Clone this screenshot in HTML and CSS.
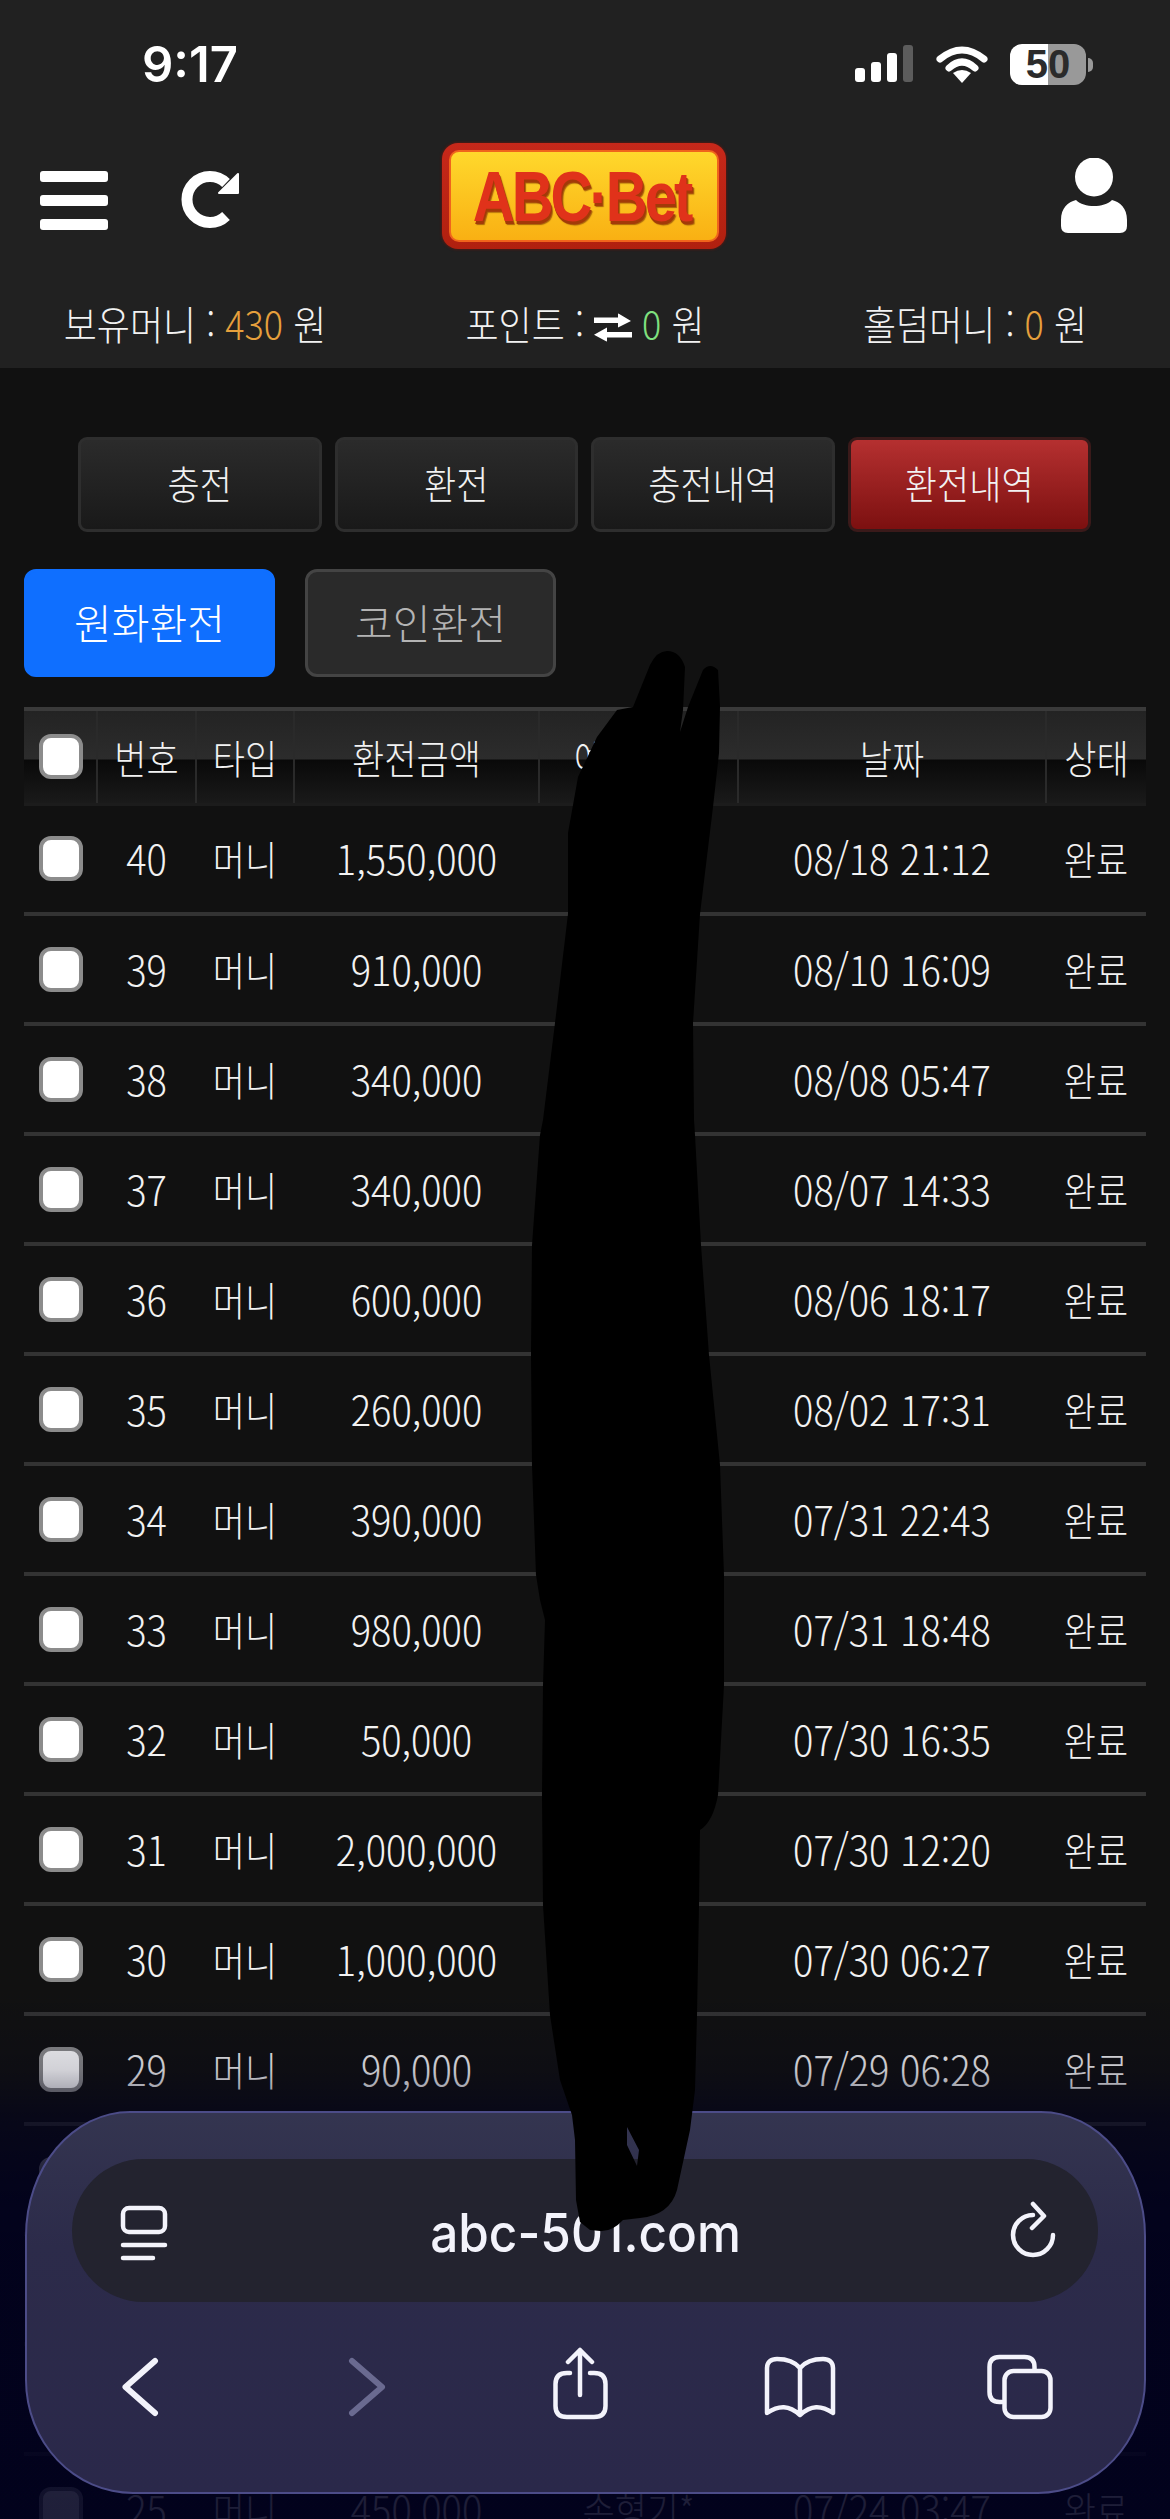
FILE: index.html
```html
<!DOCTYPE html>
<html lang="ko">
<head>
    <meta charset="UTF-8">
    <meta name="viewport" content="width=device-width, initial-scale=1.0">
    <title>ABC-Bet 환전내역</title>
    <link rel="stylesheet" href="styles.css">
</head>
<body>
    <header class="top">
        <div class="status">
            <span class="clock">9:17</span>
            <div class="status-icons">
                <svg width="60" height="40" viewBox="0 0 60 40">
                    <rect x="1" y="24" width="10" height="14" rx="3" fill="#fff"/>
                    <rect x="17" y="18" width="10" height="20" rx="3" fill="#fff"/>
                    <rect x="33" y="9" width="10" height="29" rx="3" fill="#fff"/>
                    <rect x="49" y="1" width="10" height="37" rx="3" fill="#5c5c5c"/>
                </svg>
                <svg width="52" height="40" viewBox="0 0 52 40">
                    <path d="M4 15 Q26 -3 48 15" fill="none" stroke="#fff" stroke-width="7" stroke-linecap="round"/>
                    <path d="M13 24 Q26 12 39 24" fill="none" stroke="#fff" stroke-width="7" stroke-linecap="round"/>
                    <path d="M17 29 Q26 23 35 29 L26 39 Z" fill="#fff"/>
                </svg>
                <div class="battery">50</div>
            </div>
        </div>

        <div class="topbar">
            <div class="topbar-left">
                <div class="burger"><span></span><span></span><span></span></div>
                <svg width="60" height="60" viewBox="0 0 60 60">
                    <path d="M46 46 A23 23 0 1 1 46 13" fill="none" stroke="#fff" stroke-width="11"/>
                    <polygon points="58,4 58,23 39,23" fill="#fff" stroke="#fff" stroke-width="2" stroke-linejoin="round"/>
                </svg>
            </div>
            <div class="logo"><div class="logo-in"><span>ABC·Bet</span></div></div>
            <div class="topbar-right">
                <svg width="68" height="76" viewBox="0 0 68 76">
                    <ellipse cx="34" cy="19" rx="19" ry="19.5" fill="#fff"/>
                    <path d="M1 62 C1 50 8 44 16 42 C24 50 44 50 52 42 C60 44 67 50 67 62 V68 Q67 75 60 75 H8 Q1 75 1 68 Z" fill="#fff"/>
                </svg>
            </div>
        </div>

        <div class="money">
            <div>보유머니 : <em class="orange">430</em> 원</div>
            <div>포인트 :
                <svg class="swap" width="38" height="26" viewBox="0 0 38 26">
                    <path d="M0 4 H24 V0 L37 7 L24 13 V9 H0 Z" fill="#fff"/>
                    <path d="M38 17 H13 V13 L0 19.5 L13 26 V22 H38 Z" fill="#fff"/>
                </svg>
                <em class="green">0</em> 원</div>
            <div>홀덤머니 : <em class="orange">0</em> 원</div>
        </div>
    </header>

    <main class="content">
        <nav class="menu">
            <a><span>충전</span></a>
            <a><span>환전</span></a>
            <a><span>충전내역</span></a>
            <a class="on"><span>환전내역</span></a>
        </nav>

        <div class="tabs">
            <button class="tab on">원화환전</button>
            <button class="tab">코인환전</button>
        </div>

        <table class="list">
            <colgroup>
                <col class="c-check"><col class="c-no"><col class="c-type"><col class="c-amount">
                <col class="c-name"><col class="c-date"><col class="c-state">
            </colgroup>
            <thead>
                <tr><th><input type="checkbox"></th><th><span>번호</span></th><th><span>타입</span></th><th><span>환전금액</span></th><th><span>예금주명</span></th><th><span>날짜</span></th><th><span>상태</span></th></tr>
            </thead>
            <tbody>
                <tr><td><input type="checkbox"></td><td>40</td><td>머니</td><td>1,550,000</td><td></td><td>08/18 21:12</td><td>완료</td></tr>
                <tr><td><input type="checkbox"></td><td>39</td><td>머니</td><td>910,000</td><td></td><td>08/10 16:09</td><td>완료</td></tr>
                <tr><td><input type="checkbox"></td><td>38</td><td>머니</td><td>340,000</td><td></td><td>08/08 05:47</td><td>완료</td></tr>
                <tr><td><input type="checkbox"></td><td>37</td><td>머니</td><td>340,000</td><td></td><td>08/07 14:33</td><td>완료</td></tr>
                <tr><td><input type="checkbox"></td><td>36</td><td>머니</td><td>600,000</td><td></td><td>08/06 18:17</td><td>완료</td></tr>
                <tr><td><input type="checkbox"></td><td>35</td><td>머니</td><td>260,000</td><td></td><td>08/02 17:31</td><td>완료</td></tr>
                <tr><td><input type="checkbox"></td><td>34</td><td>머니</td><td>390,000</td><td></td><td>07/31 22:43</td><td>완료</td></tr>
                <tr><td><input type="checkbox"></td><td>33</td><td>머니</td><td>980,000</td><td></td><td>07/31 18:48</td><td>완료</td></tr>
                <tr><td><input type="checkbox"></td><td>32</td><td>머니</td><td>50,000</td><td></td><td>07/30 16:35</td><td>완료</td></tr>
                <tr><td><input type="checkbox"></td><td>31</td><td>머니</td><td>2,000,000</td><td></td><td>07/30 12:20</td><td>완료</td></tr>
                <tr><td><input type="checkbox"></td><td>30</td><td>머니</td><td>1,000,000</td><td></td><td>07/30 06:27</td><td>완료</td></tr>
                <tr><td><input type="checkbox"></td><td>29</td><td>머니</td><td>90,000</td><td></td><td>07/29 06:28</td><td>완료</td></tr>
                <tr><td><input type="checkbox"></td><td>28</td><td>머니</td><td></td><td></td><td></td><td>완료</td></tr>
                <tr><td><input type="checkbox"></td><td>27</td><td>머니</td><td></td><td></td><td></td><td>완료</td></tr>
                <tr><td><input type="checkbox"></td><td>26</td><td>머니</td><td></td><td></td><td></td><td>완료</td></tr>
                <tr><td><input type="checkbox"></td><td>25</td><td>머니</td><td>450,000</td><td>손형기*</td><td>07/24 03:47</td><td>완료</td></tr>
            </tbody>
        </table>
    </main>

    <!-- safari toolbar sits over the page -->
    <div class="fade"></div>
    <div class="safari">
        <div class="url">
            <svg width="50" height="60" viewBox="0 0 50 60" class="ico">
                <rect x="4" y="7" width="42" height="24" rx="6"/>
                <path d="M4 44 H46 M4 57 H34"/>
            </svg>
            <span class="addr">abc-501.com</span>
            <svg width="50" height="60" viewBox="0 0 50 60" class="ico">
                <path d="M45 34 A20 20 0 1 1 25 14"/>
                <path d="M25 3 L36 15 L24 27"/>
            </svg>
        </div>
        <div class="tools">
            <svg width="40" height="60" viewBox="0 0 40 60" class="ico thick"><path d="M35 4 L5.5 30 L35 56"/></svg>
            <svg width="40" height="60" viewBox="0 0 40 60" class="ico thick off"><path d="M5 4 L35 30 L5 56"/></svg>
            <svg width="64" height="80" viewBox="0 0 64 80" class="ico">
                <path d="M32 3 V48 M20 15 L32 3 L44 15"/>
                <path d="M22 26 H19 Q7.5 26 7.5 37 V59 Q7.5 70 19 70 H46 Q57.5 70 57.5 59 V37 Q57.5 26 46 26 H42"/>
            </svg>
            <svg width="76" height="64" viewBox="0 0 76 64" class="ico">
                <path d="M38 13 C32 6 22 4 15 4 C9 4 5 7 5 13 V58 C17 50 27 50 38 60 C49 50 59 50 71 58 V13 C71 7 67 4 61 4 C54 4 44 6 38 13 V60"/>
            </svg>
            <svg width="72" height="72" viewBox="0 0 72 72" class="ico">
                <path d="M50.5 18 V16 Q50.5 6 40.5 6 H15.5 Q5.5 6 5.5 16 V41 Q5.5 51 15.5 51 H18"/>
                <rect x="20.5" y="20" width="46" height="46" rx="9"/>
            </svg>
        </div>
    </div>

    <!-- blacked out by hand in the screenshot -->
    <svg class="scribble" width="1170" height="2519" viewBox="0 0 1170 2519">
        <path fill-rule="evenodd" d="M667 651 Q680 651 685 667 L683 710 L680 732 L688 707 L703 670 Q710 662 718 670 L720 707 L719 753 L713 807 L700 914 L693 1023 L694 1120 L695 1135 L701 1245 L709 1355 L720 1465 L724 1575 L724 1685 L718 1795 Q713 1822 700 1830 L699 1905 L697 2015 L695 2090 L690 2130 L677 2190 Q670 2215 640 2218 L623 2220 Q612 2232 600 2231 L590 2230 L580 2222 L576 2200 L575 2140 L572 2115 L560 2080 L550 2015 L543 1905 L542 1795 L543 1685 L545 1620 L540 1600 L536 1575 L532 1465 L531 1355 L532 1245 L540 1135 L543 1120 L555 1023 L568 914 L568 833 L578 777 L597 737 L617 710 L633 707 L650 665 Q657 651 667 651 Z M627 2127 L639 2150 L637 2166 L627 2145 Z"/>
    </svg>
</body>
</html>
```

FILE: styles.css
```css
* {
    box-sizing: border-box;
    font-family: "Noto Sans CJK KR", "Noto Sans", sans-serif;
}

html, body {
    margin: 0;
    height: 2519px;
    overflow: hidden;
}

body {
    position: relative;
    background-color: #111;
    color: #f2f2f2;
    font-size: 35px;
    font-weight: 300;
}

/* header */
.top {
    background-color: #212121;
    height: 368px;
}

.status {
    height: 128px;
    padding: 0 84px 0 142px;
    display: flex;
    align-items: center;
    justify-content: space-between;
}

.clock {
    font-family: Inter, sans-serif;
    font-size: 49px;
    font-weight: 600;
    color: #fff;
}

.status-icons {
    display: flex;
    align-items: center;
    gap: 22px;
}

.battery {
    position: relative;
    width: 76px;
    height: 41px;
    border-radius: 12px;
    background: linear-gradient(90deg, #fff 50%, #999 50%);
    color: #2b2b2b;
    font-family: "Liberation Sans", sans-serif;
    font-size: 40px;
    font-weight: 700;
    line-height: 41px;
    text-align: center;
}

.battery::after {
    content: "";
    position: absolute;
    right: -7px;
    top: 14px;
    width: 5px;
    height: 14px;
    border-radius: 0 5px 5px 0;
    background-color: #999;
}

.topbar {
    height: 136px;
    padding: 0 42px 0 40px;
    display: grid;
    grid-template-columns: 1fr auto 1fr;
    align-items: center;
}

.topbar-left {
    margin-top: 8px;
    display: flex;
    align-items: center;
    gap: 72px;
}

.topbar-right {
    display: flex;
    justify-content: flex-end;
}

.burger {
    width: 68px;
    display: flex;
    flex-direction: column;
    gap: 13px;
}

.burger span {
    height: 11px;
    border-radius: 3px;
    background-color: #fff;
}

.logo {
    width: 284px;
    height: 106px;
    padding: 7px;
    border-radius: 16px;
    background: linear-gradient(#c7281a, #b0200f);
    box-shadow: 0 0 3px #7a1208;
}

.logo-in {
    height: 100%;
    padding-right: 5px;
    display: flex;
    align-items: center;
    justify-content: center;
    border: 2px solid #f0641c;
    border-radius: 10px;
    background: linear-gradient(#ffd82c, #f9b013);
}

.logo-in span {
    font-family: "Liberation Sans", sans-serif;
    font-size: 58px;
    font-weight: 700;
    letter-spacing: -3px;
    color: #e0321a;
    text-shadow: 1px 2px 0 #a33a08, 2px 3px 1px #a8610a;
    transform: scaleY(1.2);
}

.money {
    height: 104px;
    padding-top: 12px;
    display: grid;
    grid-template-columns: repeat(3, 1fr);
    align-items: center;
    text-align: center;
    font-size: 36px;
}

.money div {
    transform: scaleY(1.1);
}

.money em {
    font-style: normal;
}

.orange {
    color: #e6a03c;
}

.green {
    color: #7fe07f;
}

.swap {
    vertical-align: -2px;
}

/* page */
.content {
    padding: 69px 24px 0;
}

.menu {
    display: flex;
    gap: 13px;
    padding: 0 55px 0 54px;
}

.menu a {
    flex: 1;
    height: 95px;
    padding-bottom: 6px;
    display: flex;
    align-items: center;
    justify-content: center;
    border: 3px solid #2e2e2e;
    border-radius: 9px;
    background: linear-gradient(#2b2b2b, #191919);
}

.menu a span {
    transform: scaleY(1.12);
}

.menu a.on {
    border-color: #3a1a1a;
    background: linear-gradient(#b53030, #7c1010);
}

.tabs {
    display: flex;
    gap: 30px;
    margin-top: 37px;
}

.tab {
    width: 251px;
    height: 108px;
    padding: 0 0 4px;
    border: 3px solid #444;
    border-radius: 12px;
    background-color: #2a2a2a;
    color: #b4b4b4;
    font-size: 41px;
    font-weight: 300;
}

.tab.on {
    border-color: #0f6fff;
    background-color: #0f6fff;
    color: #fff;
}

.list {
    width: 1122px;
    margin-top: 30px;
    table-layout: fixed;
    border-collapse: collapse;
    text-align: center;
}

.c-check { width: 73px; }
.c-no { width: 99px; }
.c-type { width: 98px; }
.c-amount { width: 245px; }
.c-name { width: 199px; }
.c-date { width: 308px; }
.c-state { width: 100px; }

.list th {
    height: 95px;
    padding: 0;
    font-weight: 300;
    border-top: 4px solid #3a3a3a;
    border-bottom: 3px solid #1c1c1c;
    border-right: 2px solid #2a2a2a;
    background: linear-gradient(#232323 0, #2c2c2c 48px, #090909 49px, #1a1a1a 100%);
}

.list th:last-child {
    border-right: 0;
}

.list th span {
    display: inline-block;
    transform: scaleY(1.13);
}

.list tbody tr {
    border-bottom: 4px solid #333;
}

.list td {
    height: 110px;
    padding: 0 0 2px;
    transform: scaleY(1.13);
}

.list td:first-child {
    padding: 0;
    transform: none;
}

/* digits run wider than the hangul next to them */
.list td:nth-child(2),
.list td:nth-child(4),
.list td:nth-child(6) {
    font-size: 38px;
    transform: scaleY(1.07);
}

.list input {
    appearance: none;
    display: block;
    width: 44px;
    height: 45px;
    margin: 0 0 0 15px;
    border: 4px solid #8c8c8c;
    border-radius: 12px;
    background-color: #fff;
}

/* safari */
.fade {
    position: absolute;
    left: 0;
    right: 0;
    top: 1990px;
    bottom: 0;
    background: linear-gradient(rgba(0, 0, 30, 0) 0, rgba(0, 0, 30, .18) 80px, rgba(0, 0, 30, .6) 135px, rgba(0, 0, 30, .85) 220px, rgba(0, 0, 30, .88) 100%);
}

.safari {
    position: absolute;
    left: 25px;
    bottom: 25px;
    width: 1121px;
    height: 383px;
    padding: 46px 47px 0 45px;
    border: 2px solid #4c4c88;
    border-radius: 105px 105px 108px 108px / 125px 125px 114px 114px;
    background: linear-gradient(#343550 0, #2c2b4a 35%, #2a284a 100%);
}

.url {
    height: 143px;
    margin: 0 -1px 0 0;
    padding: 0 40px 0 47px;
    display: flex;
    align-items: center;
    justify-content: space-between;
    border-radius: 72px;
    background-color: #23232f;
}

.addr {
    display: inline-block;
    padding: 4px 6px 0 0;
    font-family: Inter, sans-serif;
    font-size: 49.5px;
    font-weight: 500;
    color: #f3f3fb;
    transform: scaleY(1.07);
}

.tools {
    height: 170px;
    margin-left: -42px;
    display: grid;
    grid-template-columns: repeat(5, 220px);
    align-items: center;
    justify-items: center;
}

.ico {
    fill: none;
    stroke: #f3f3fb;
    stroke-width: 4.5;
    stroke-linecap: round;
    stroke-linejoin: round;
}

.ico.thick {
    stroke-width: 6;
}

.ico.off {
    stroke: #6a6a90;
    margin-left: 14px;
}

.scribble {
    position: absolute;
    left: 0;
    top: 0;
}
```
